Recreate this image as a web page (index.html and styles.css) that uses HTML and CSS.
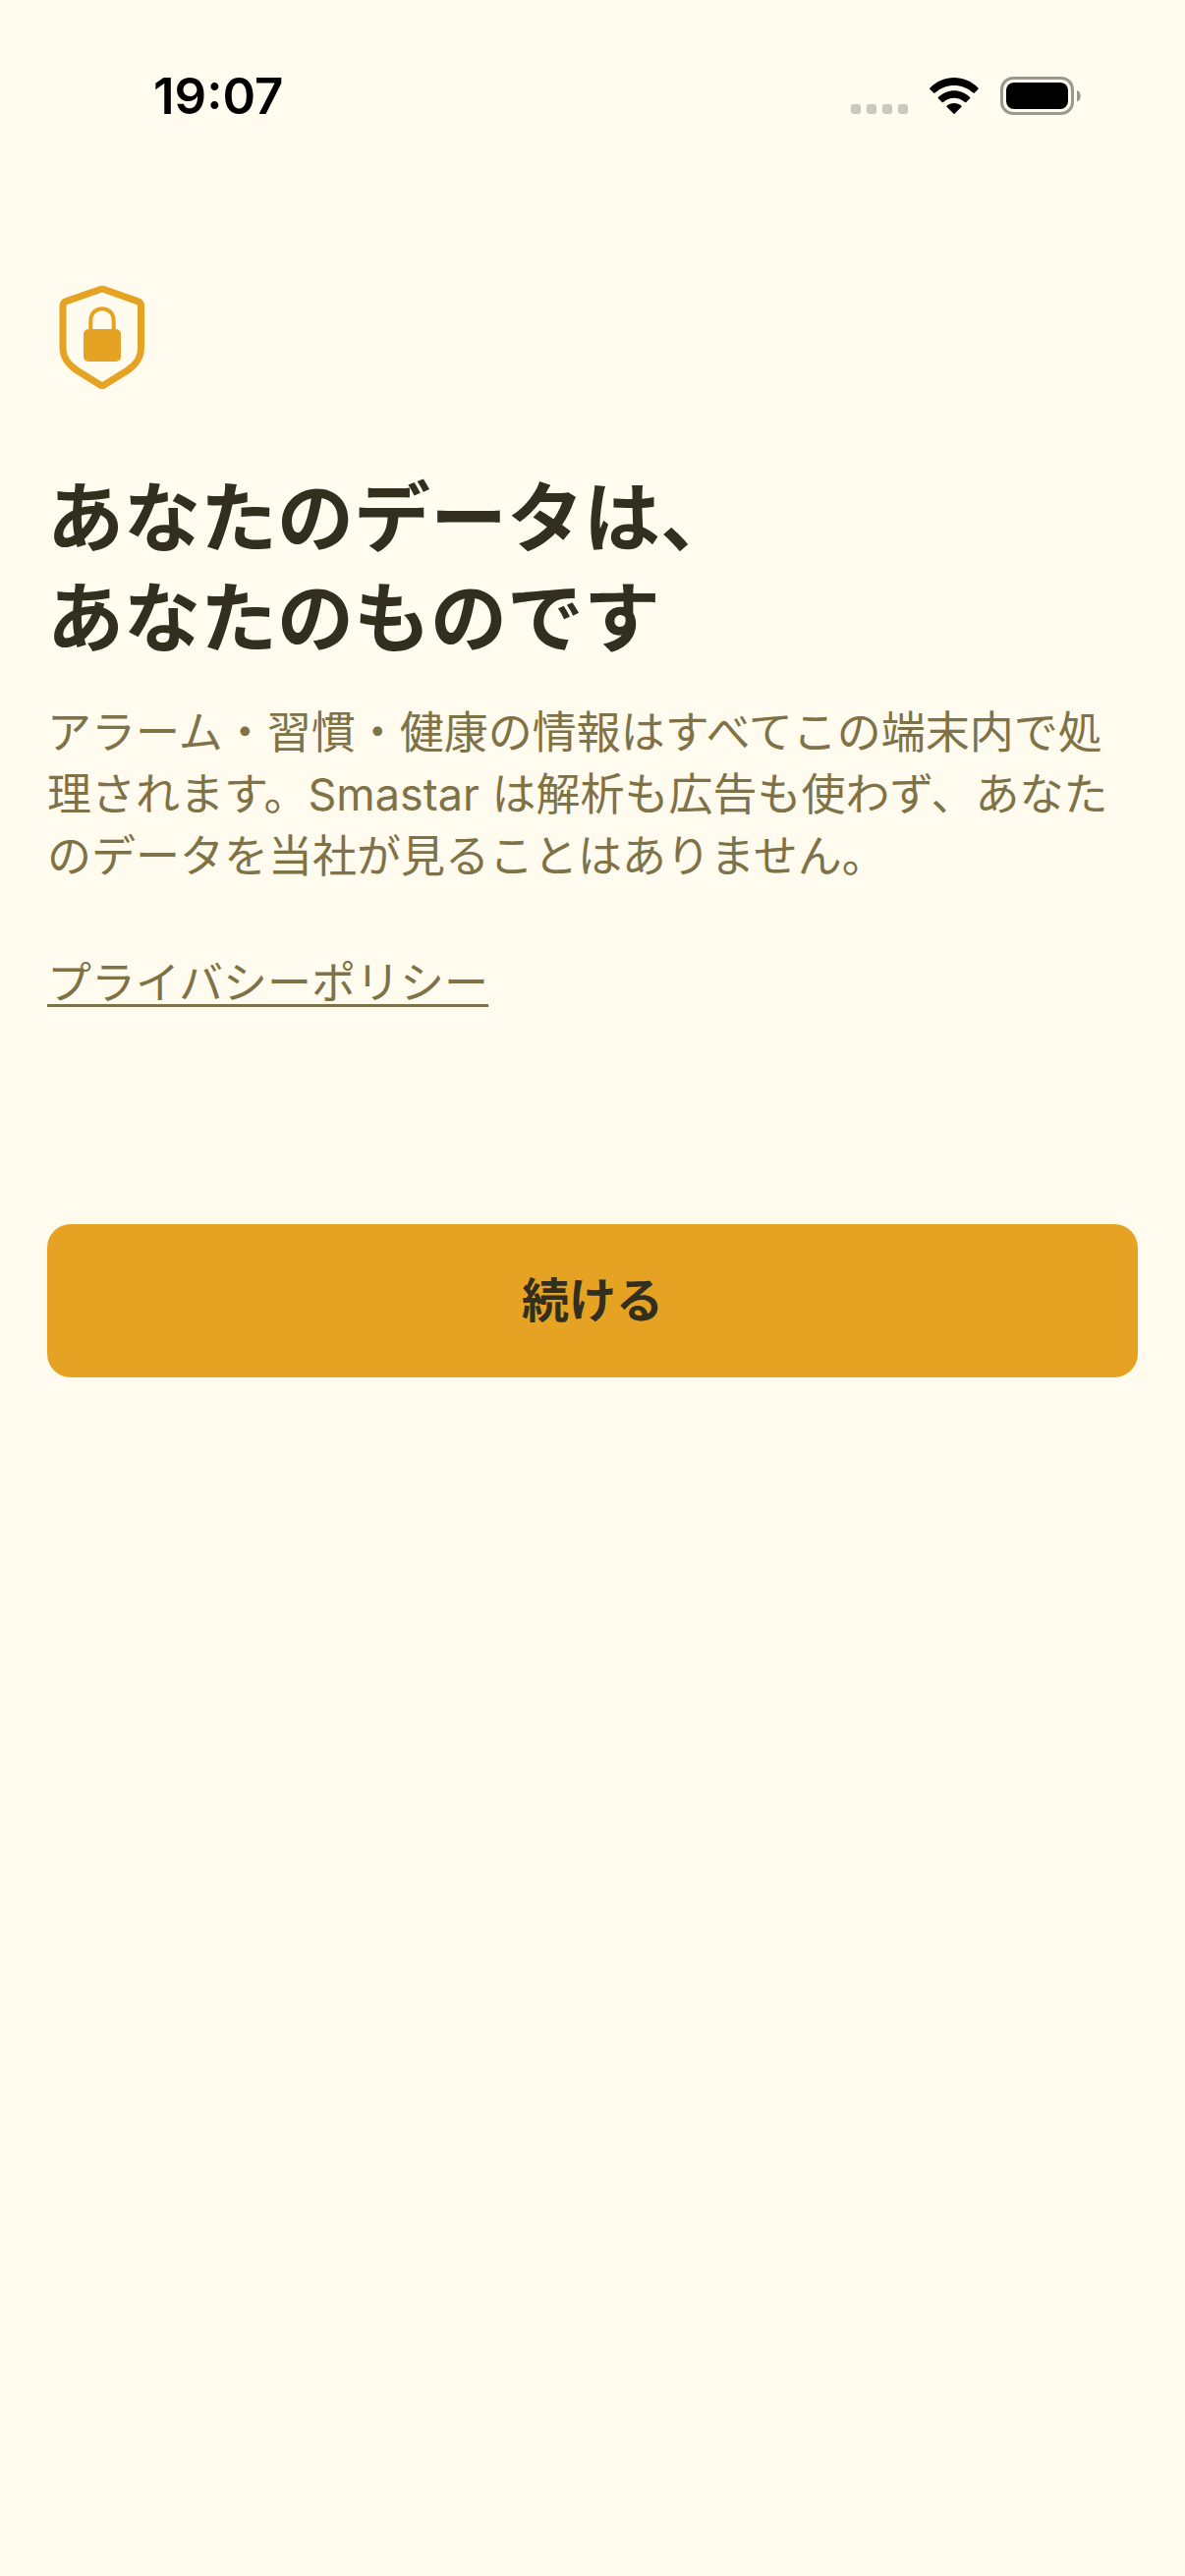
FILE: index.html
```html
<!DOCTYPE html>
<html lang="ja">
<head>
    <meta charset="UTF-8">
    <meta name="viewport" content="width=device-width, initial-scale=1">
    <title>Smastar</title>
    <link rel="stylesheet" href="styles.css">
</head>
<body>
    <header class="status-bar">
        <time class="clock">19:07</time>
        <div class="status-icons">
            <svg class="signal" width="58" height="10" viewBox="0 0 58 10" aria-hidden="true">
                <rect x="0" y="0" width="10" height="10" rx="3"/>
                <rect x="16" y="0" width="10" height="10" rx="3"/>
                <rect x="32" y="0" width="10" height="10" rx="3"/>
                <rect x="48" y="0" width="10" height="10" rx="3"/>
            </svg>
            <svg class="wifi" width="50" height="38" viewBox="0 0 50 38" aria-hidden="true">
                <path d="M0 11.5Q0 11 .5 10.500C14 -3.500 36 -3.500 49.500 10.500Q50 11 49.500 11.700L45.500 15.700Q45 16 44.500 15.600C33.500 5.300 16.500 5.300 5.500 15.600Q5 16 4.500 15.700Z"/>
                <path d="M8.700 20.200C18 11 32 11 41.300 20.200Q41.700 20.700 41.300 21.100L37 25.200Q36.500 25.500 36 25.100C29.500 19.300 20.500 19.300 14 25.100Q13.500 25.500 13 25.200L8.700 21.100Q8.300 20.700 8.700 20.200Z"/>
                <path d="M17.500 28.800C21.500 25.200 28.500 25.200 32.500 28.800Q33 29.300 32.500 29.800L25.500 36.800Q25 37.200 24.500 36.800L17.500 29.800Q17 29.300 17.500 28.800Z"/>
            </svg>
            <svg class="battery" width="82" height="40" viewBox="0 0 82 40" aria-hidden="true">
                <rect class="battery-case" x="1.500" y="1.500" width="72" height="36" rx="11.500"/>
                <path class="battery-tip" d="M78 14C83 15.500 83 24 78 25.500Z"/>
                <rect x="6" y="6" width="63" height="27" rx="8"/>
            </svg>
        </div>
    </header>

    <main class="intro">
        <svg class="shield" width="112" height="112" viewBox="0 0 112 112" aria-hidden="true">
            <path class="shield-outline" d="M53.500 10.800Q56 9.900 58.500 10.800L92 22.600Q95.500 24 95.500 27.500V70C95.500 81 90 87.500 81 93.500L58.500 107.500Q56 109.200 53.500 107.500L31 93.500C22 87.500 16 81 16 70V27.500Q16 24 19.500 22.600Z"/>
            <path class="shackle" d="M44.300 53V42.500C44.300 26 67.700 26 67.700 42.500V53"/>
            <rect class="lock" x="37" y="51" width="38" height="33" rx="5"/>
        </svg>
        <h1>あなたのデータは、<br>あなたのものです</h1>
        <p>アラーム・習慣・健康の情報はすべてこの端末内で処理されます。Smastar は解析も広告も使わず、あなたのデータを当社が見ることはありません。</p>
        <a class="policy" href="#privacy">プライバシーポリシー</a>
        <button class="continue" type="button">続ける</button>
    </main>
</body>
</html>
```
FILE: styles.css
```css
:root {
    --primary: #e6a323;
    --text: #332f1f;
    --muted: #7f7246;
    --background: #fffbee;
}

* {
    box-sizing: border-box;
}

body {
    margin: 0;
    font-family: Inter, "Noto Sans CJK JP", sans-serif;
    color: var(--text);
    background: var(--background);
    text-autospace: normal;
}

.status-bar {
    display: flex;
    align-items: center;
    justify-content: space-between;
    height: 196px;
    padding: 0 106px 0 156px;
    color: black;
}

.clock {
    font-size: 51px;
    font-weight: 600;
    line-height: 60px;
}

.status-icons {
    display: flex;
    align-items: center;
    gap: 22px;
}

.signal {
    align-self: flex-end;
    margin-bottom: 2px;
    fill: #cbc8bc;
}

.battery-case {
    fill: none;
    stroke: #9c998c;
    stroke-width: 3;
}

.battery-tip {
    fill: #9c998c;
}

.intro {
    display: flex;
    flex-direction: column;
    align-items: flex-start;
    padding: 88px 48px 48px;
}

.shield-outline {
    fill: none;
    stroke: var(--primary);
    stroke-width: 7;
    stroke-linejoin: round;
}

.shackle {
    fill: none;
    stroke: var(--primary);
    stroke-width: 4;
}

.lock {
    fill: var(--primary);
}

h1 {
    margin: 81px 0 33px;
    font-size: 78px;
    font-weight: 700;
    line-height: 102px;
}

p {
    margin: 0 0 66px;
    font-size: 45px;
    line-height: 63px;
    color: var(--muted);
}

.policy {
    font-size: 45px;
    line-height: 63px;
    color: var(--muted);
    text-decoration-thickness: 3px;
    text-underline-offset: 5px;
    text-decoration-skip-ink: none;
}

.continue {
    width: 100%;
    margin-top: 214px;
    padding: 48px;
    border: none;
    border-radius: 24px;
    background: var(--primary);
    color: var(--text);
    font-family: inherit;
    font-size: 48px;
    font-weight: 700;
    line-height: 60px;
    cursor: pointer;
}
```
